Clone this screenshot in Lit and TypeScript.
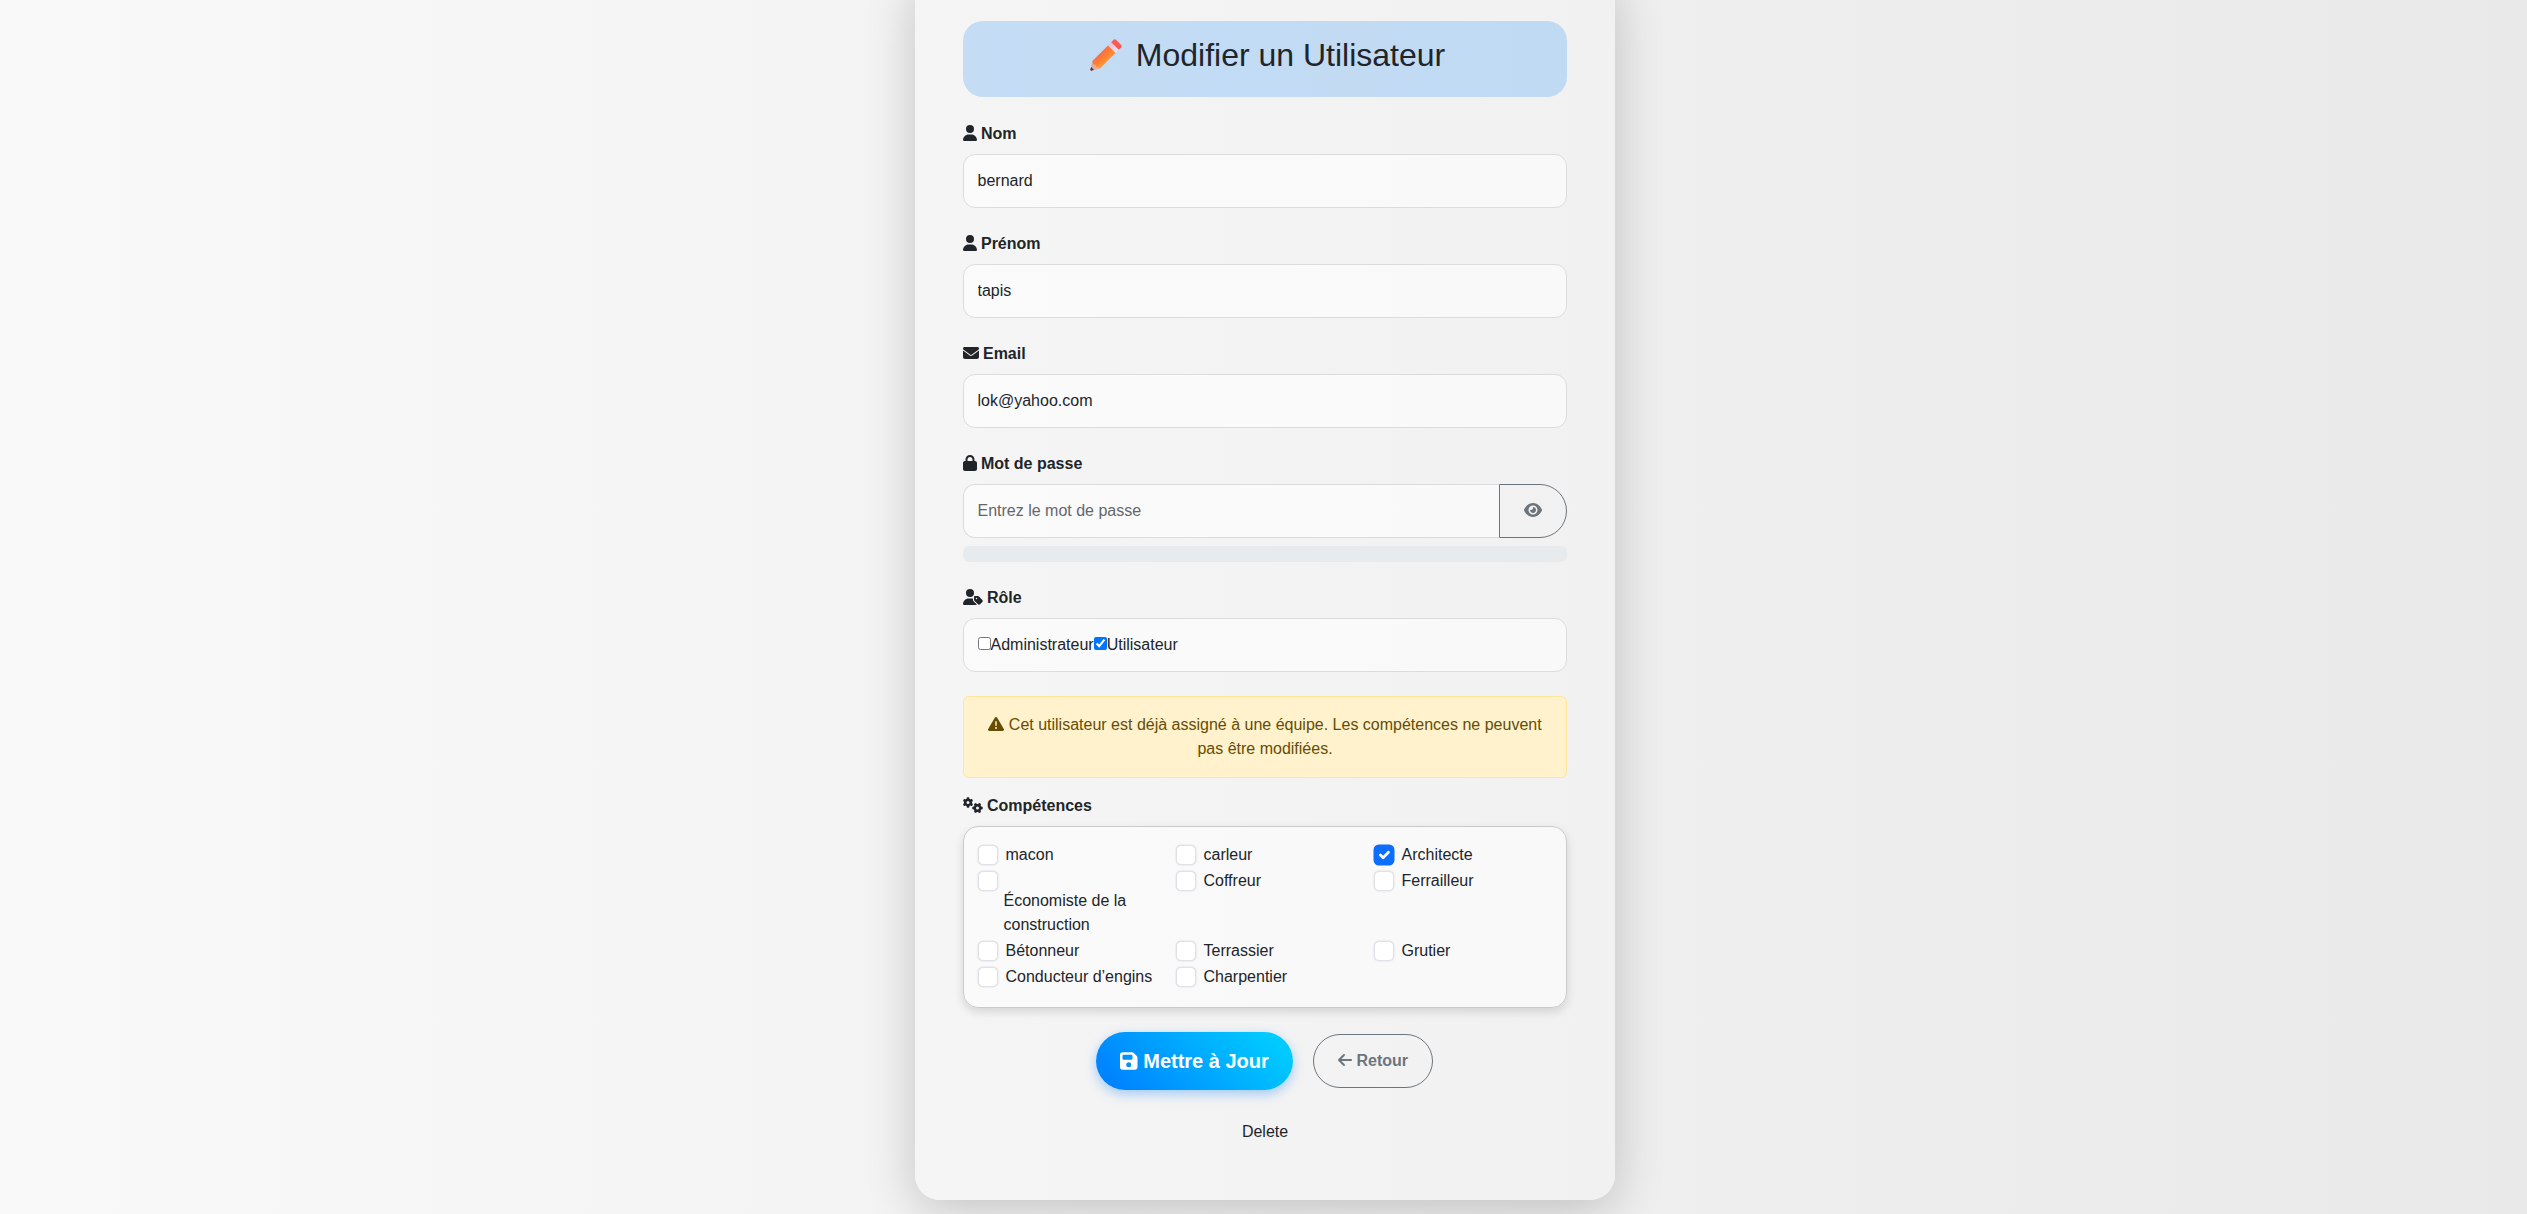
import { LitElement, html, css, svg } from "lit";
import { customElement } from "lit/decorators.js";

const GEAR =
  "M308.5 135.3c7.1-6.3 9.9-16.2 6.2-25c-2.3-5.3-4.8-10.5-7.6-15.5L304 89.4c-3-5-6.3-9.9-9.8-14.6c-5.7-7.6-15.7-10.1-24.7-7.1l-28.2 9.3c-10.7-8.8-23-16-36.2-20.9L199 27.1c-1.9-9.3-9.1-16.7-18.5-17.8C173.9 8.4 167.2 8 160.4 8h-.7c-6.8 0-13.5 .4-20.1 1.2c-9.4 1.1-16.6 8.6-18.5 17.8L115 56.1c-13.3 5-25.5 12.1-36.2 20.9L50.5 67.8c-9-3-19-.5-24.7 7.1c-3.5 4.7-6.8 9.6-9.9 14.6l-3 5.3c-2.8 5-5.3 10.2-7.6 15.6c-3.7 8.7-.9 18.6 6.2 25l22.2 19.8C32.6 161.9 32 168.9 32 176s.6 14.1 1.7 20.9L11.5 216.7c-7.1 6.3-9.9 16.2-6.2 25c2.3 5.3 4.8 10.5 7.6 15.6l3 5.2c3 5.1 6.3 9.9 9.9 14.6c5.7 7.6 15.7 10.1 24.7 7.1l28.2-9.3c10.7 8.8 23 16 36.2 20.9l6.1 29.1c1.9 9.3 9.1 16.7 18.5 17.8c6.7 .8 13.5 1.2 20.4 1.2s13.7-.4 20.4-1.2c9.4-1.1 16.6-8.6 18.5-17.8l6.1-29.1c13.3-5 25.5-12.1 36.2-20.9l28.2 9.3c9 3 19 .5 24.7-7.1c3.5-4.7 6.8-9.5 9.8-14.6l3.1-5.4c2.8-5 5.3-10.2 7.6-15.5c3.7-8.7 .9-18.6-6.2-25l-22.2-19.8c1.1-6.8 1.7-13.8 1.7-20.9s-.6-14.1-1.7-20.9l22.2-19.8zM112 176a48 48 0 1 1 96 0 48 48 0 1 1 -96 0z";

const PATHS: Record<string, [number, string]> = {
  user: [448, "M224 256A128 128 0 1 0 224 0a128 128 0 1 0 0 256zm-45.7 48C79.8 304 0 383.8 0 482.3C0 498.7 13.3 512 29.7 512H418.3c16.4 0 29.7-13.3 29.7-29.7C448 383.8 368.2 304 269.7 304H178.3z"],
  envelope: [512, "M48 64C21.5 64 0 85.5 0 112c0 15.1 7.1 29.3 19.2 38.4L236.8 313.6c11.4 8.5 27 8.5 38.4 0L492.8 150.4c12.1-9.1 19.2-23.3 19.2-38.4c0-26.5-21.5-48-48-48H48zM0 176V384c0 35.3 28.7 64 64 64H448c35.3 0 64-28.7 64-64V176L294.4 339.2c-22.8 17.1-54 17.1-76.8 0L0 176z"],
  lock: [448, "M144 144v48H304V144c0-44.2-35.8-80-80-80s-80 35.8-80 80zM80 192V144C80 64.5 144.5 0 224 0s144 64.5 144 144v48h16c35.3 0 64 28.7 64 64V448c0 35.3-28.7 64-64 64H64c-35.3 0-64-28.7-64-64V256c0-35.3 28.7-64 64-64H80z"],
  userTag: [640, "M224 256A128 128 0 1 0 224 0a128 128 0 1 0 0 256zm-45.7 48C79.8 304 0 383.8 0 482.3C0 498.7 13.3 512 29.7 512H418.3c10 0 18.8-4.9 24.2-12.5l-99.2-99.2c-14.9-14.9-23.3-35.1-23.3-56.1v-33c-15.9-4.7-32.8-7.2-50.3-7.2H178.3zM384 224c-17.7 0-32 14.3-32 32v82.7c0 17 6.7 33.3 18.7 45.3L478.1 491.3c18.7 18.7 49.1 18.7 67.9 0l73.4-73.4c18.7-18.7 18.7-49.1 0-67.9L512 242.7c-12-12-28.3-18.7-45.3-18.7H384zm24 80a24 24 0 1 1 48 0 24 24 0 1 1 -48 0z"],
  warning: [512, "M256 32c14.2 0 27.3 7.5 34.5 19.8l216 368c7.3 12.4 7.3 27.7 .2 40.1S486.3 480 472 480H40c-14.3 0-27.6-7.7-34.7-20.1s-7-27.8 .2-40.1l216-368C228.7 39.5 241.8 32 256 32zm0 128c-13.3 0-24 10.7-24 24V296c0 13.3 10.7 24 24 24s24-10.7 24-24V184c0-13.3-10.7-24-24-24zm32 224a32 32 0 1 0 -64 0 32 32 0 1 0 64 0z"],
  eye: [576, "M288 32c-80.8 0-145.5 36.8-192.6 80.6C48.6 156 17.3 208 2.5 243.7c-3.3 7.9-3.3 16.7 0 24.6C17.3 304 48.6 356 95.4 399.4C142.5 443.2 207.2 480 288 480s145.5-36.8 192.6-80.6c46.8-43.5 78.1-95.4 93-131.1c3.3-7.9 3.3-16.7 0-24.6c-14.9-35.7-46.2-87.7-93-131.1C433.5 68.8 368.8 32 288 32zM144 256a144 144 0 1 1 288 0 144 144 0 1 1 -288 0zm144-64c0 35.3-28.7 64-64 64c-7.1 0-13.9-1.2-20.3-3.3c-5.5-1.8-11.9 1.6-11.7 7.4c.3 6.9 1.3 13.8 3.2 20.7c13.7 51.2 66.4 81.6 117.6 67.9s81.6-66.4 67.9-117.6c-11.1-41.5-47.8-69.4-88.6-71.1c-5.8-.2-9.2 6.1-7.4 11.7c2.1 6.4 3.3 13.2 3.3 20.3z"],
  save: [448, "M64 32C28.7 32 0 60.7 0 96V416c0 35.3 28.7 64 64 64H384c35.3 0 64-28.7 64-64V173.3c0-17-6.7-33.3-18.7-45.3L352 50.7C340 38.7 323.7 32 306.7 32H64zm0 96c0-17.7 14.3-32 32-32H288c17.7 0 32 14.3 32 32v64c0 17.7-14.3 32-32 32H96c-17.7 0-32-14.3-32-32V128zM224 288a64 64 0 1 1 0 128 64 64 0 1 1 0-128z"],
  arrowLeft: [448, "M9.4 233.4c-12.5 12.5-12.5 32.8 0 45.3l160 160c12.5 12.5 32.8 12.5 45.3 0s12.5-32.8 0-45.3L109.2 288 416 288c17.7 0 32-14.3 32-32s-14.3-32-32-32l-306.7 0L214.6 118.6c12.5-12.5 12.5-32.8 0-45.3s-32.8-12.5-45.3 0l-160 160z"],
  gears: [640, GEAR],
};

const icon = (name: string) => {
  const [w, d] = PATHS[name];
  return html`<svg class="icon w${w}" viewBox="0 0 ${w} 512" aria-hidden="true">
    <path d=${d}></path>
    ${name === "gears"
      ? svg`<path d=${GEAR} transform="translate(464 352) rotate(90) translate(-160 -176)"></path>`
      : ""}
  </svg>`;
};

const pencil = html`<svg class="pencil" viewBox="0 0 32 32" aria-hidden="true">
  <defs>
    <linearGradient id="wood" x1="9" y1="15" x2="17" y2="24" gradientUnits="userSpaceOnUse">
      <stop offset="0" stop-color="#fb6d4c"></stop>
      <stop offset=".5" stop-color="#ff7f30"></stop>
      <stop offset="1" stop-color="#ffa03c"></stop>
    </linearGradient>
    <linearGradient id="band" x1="20" y1="7" x2="26" y2="13" gradientUnits="userSpaceOnUse">
      <stop offset="0" stop-color="#e8c6d4"></stop>
      <stop offset="1" stop-color="#e8e0f4"></stop>
    </linearGradient>
  </defs>
  <path d="M2.3 22.1L9.9 29.7L1.8 31.6Q0 32 .4 30.2z" fill="#e0ae98"></path>
  <path d="M1.1 28L4 30.9L1.8 31.6Q0 32 .4 30.2z" fill="#4b2a50"></path>
  <path d="M2.3 22.1L18.2 6.2L25.8 13.8L9.9 29.7L8 27.8L6.4 28L5.6 25.8L3.4 25.4z" fill="url(#wood)"></path>
  <path d="M18 6.4L21.4 3L29 10.6L25.6 14z" fill="url(#band)"></path>
  <path d="M21.2 3.2L23.6 .8Q24.8 -.2 26 .8L31.2 6Q32.2 7.2 31.2 8.4L28.8 10.8z" fill="#fb5a53"></path>
</svg>`;

interface Skill {
  name: string;
  on?: boolean;
  long?: boolean;
}

const SKILLS: Skill[] = [
  { name: "macon" },
  { name: "carleur" },
  { name: "Architecte", on: true },
  { name: "Économiste de la construction", long: true },
  { name: "Coffreur" },
  { name: "Ferrailleur" },
  { name: "Bétonneur" },
  { name: "Terrassier" },
  { name: "Grutier" },
  { name: "Conducteur d’engins" },
  { name: "Charpentier" },
];

@customElement("app-root")
export class AppRoot extends LitElement {
  static styles = css`
    :host {
      display: flex;
      justify-content: center;
      align-items: flex-end;
      box-sizing: border-box;
      height: 1214px;
      padding: 0 0 14px 3px;
      overflow: hidden;
      background: linear-gradient(90deg, #f9f9f9, #e9e9e9);
      font: 16px/24px "Liberation Sans", Arial, sans-serif;
      color: #212529;
    }
    * { box-sizing: border-box; }
    .card {
      flex: none;
      width: 700px;
      height: 1227px;
      padding: 48px;
      border-radius: 25px;
      background: linear-gradient(90deg, #f5f5f5, #f1f1f1);
      box-shadow: 0 10px 50px rgba(0, 0, 0, 0.2);
      display: flex;
      flex-direction: column;
    }
    .title {
      height: 76px;
      margin: 0 0 24px;
      padding: 15px 0 0 5px;
      display: flex;
      justify-content: center;
      gap: 14px;
      border-radius: 20px;
      background: linear-gradient(90deg, #c4ddf5, #c1daf3);
      font-size: 32px;
      line-height: 38px;
      font-weight: 400;
    }
    .pencil { width: 32px; height: 32px; margin-top: 3px; overflow: visible; }
    .icon { height: 1em; vertical-align: -0.125em; fill: currentColor; overflow: visible; }
    .w448 { width: 0.875em; }
    .w512 { width: 1em; }
    .w576 { width: 1.125em; }
    .w640 { width: 1.25em; }
    .label { display: block; height: 25px; padding-top: 1px; margin: 0 0 8px -0.5px; font-weight: 700; }
    .field {
      display: block;
      width: 100%;
      height: 54px;
      margin: 0 0 23px;
      padding: 0 14px 0 13.5px;
      border: 1px solid #dcdcde;
      border-radius: 12px;
      background: rgba(255, 255, 255, 0.55);
      font: inherit;
      color: inherit;
      outline: none;
    }
    .field::placeholder { color: #63676a; opacity: 1; }
    .group { display: flex; margin-bottom: 8px; }
    .group .field { flex: 1; margin: 0; border-right: 0; border-radius: 12px 0 0 12px; }
    .toggle {
      width: 68px;
      height: 54px;
      padding: 0;
      border: 1px solid #6c757d;
      border-radius: 0 27px 27px 0;
      background: none;
      color: #6c757d;
      font: inherit;
    }
    .meter { height: 16px; margin-bottom: 23px; border-radius: 6px; background: #e7ebee; }
    .roles { display: flex; align-items: center; }
    .native { width: 13px; height: 13px; margin: 0 0 3px; }
    .alert {
      height: 82px;
      margin: 1px 0 16px;
      padding: 16px;
      border: 1px solid #ffe69c;
      border-radius: 6px;
      background: #fff2cd;
      color: #664d03;
      text-align: center;
    }
    .alert + .label { height: 24px; padding-top: 0; }
    .skills {
      height: 182px;
      margin-bottom: 24px;
      padding: 16px 14px;
      display: grid;
      grid-template-columns: repeat(3, 198px);
      grid-template-rows: 26px 70px 26px 26px;
      overflow: visible;
      border: 1px solid #c9cacb;
      border-radius: 15px;
      background: rgba(255, 255, 255, 0.5);
      box-shadow: 0 4px 10px rgba(0, 0, 0, 0.13);
    }
    .skill { display: flex; align-items: flex-start; gap: 7.5px; }
    .box {
      flex: none;
      width: 20px;
      height: 20px;
      margin-top: 2px;
      border: 1px solid #dee2e6;
      border-radius: 5px;
      background: #fff;
      box-shadow: 0 0 2px rgba(0, 0, 0, 0.16);
    }
    .box.on { border-color: #0d6efd; background: #0d6efd; box-shadow: 0 0 0 0.5px #0d6efd; }
    .tick { display: block; width: 18px; height: 18px; fill: none; stroke: #fff; stroke-width: 3; stroke-linecap: round; stroke-linejoin: round; }
    .skill.long { gap: 5.5px; }
    .long .name { width: 136px; padding-top: 20px; }
    .actions { display: flex; justify-content: center; align-items: center; gap: 20px; height: 58px; padding-right: 1px; }
    .save, .back { border-radius: 29px; font: inherit; font-weight: 700; padding: 0; }
    .save {
      width: 197px;
      height: 58px;
      border: 0;
      color: #fff;
      background: linear-gradient(45deg, #007bff, #00d4ff);
      box-shadow: 0 4px 12px rgba(0, 123, 255, 0.35);
      font-size: 20px;
    }
    .back { width: 120px; height: 54px; border: 1px solid #6c757d; background: none; color: #6c757d; }
    .delete { margin-top: 30px; text-align: center; }
  `;

  private field(ic: string, label: string, value: string) {
    return html`<label class="label">${icon(ic)} ${label}</label>
      <input class="field" .value=${value} />`;
  }

  private skill(s: Skill) {
    return html`<div class="skill ${s.long ? "long" : ""}">
      <span class="box ${s.on ? "on" : ""}"
        >${s.on
          ? html`<svg class="tick" viewBox="0 0 20 20"><path d="m6 10 3 3 6-6"></path></svg>`
          : ""}</span
      >
      <span class="name">${s.name}</span>
    </div>`;
  }

  render() {
    return html`<main class="card">
      <h1 class="title">${pencil}<span>Modifier un Utilisateur</span></h1>
      ${this.field("user", "Nom", "bernard")}
      ${this.field("user", "Prénom", "tapis")}
      ${this.field("envelope", "Email", "lok@yahoo.com")}
      <label class="label">${icon("lock")} Mot de passe</label>
      <div class="group">
        <input class="field" type="password" placeholder="Entrez le mot de passe" />
        <button class="toggle">${icon("eye")}</button>
      </div>
      <div class="meter"></div>
      <label class="label">${icon("userTag")} Rôle</label>
      <div class="field roles">
        <input class="native" type="checkbox" /><span>Administrateur</span
        ><input class="native" type="checkbox" checked /><span>Utilisateur</span>
      </div>
      <div class="alert">
        ${icon("warning")} Cet utilisateur est déjà assigné à une équipe. Les compétences ne
        peuvent pas être modifiées.
      </div>
      <label class="label">${icon("gears")} Compétences</label>
      <div class="skills">${SKILLS.map((s) => this.skill(s))}</div>
      <div class="actions">
        <button class="save">${icon("save")} Mettre à Jour</button>
        <button class="back">${icon("arrowLeft")} Retour</button>
      </div>
      <div class="delete">Delete</div>
    </main>`;
  }
}
